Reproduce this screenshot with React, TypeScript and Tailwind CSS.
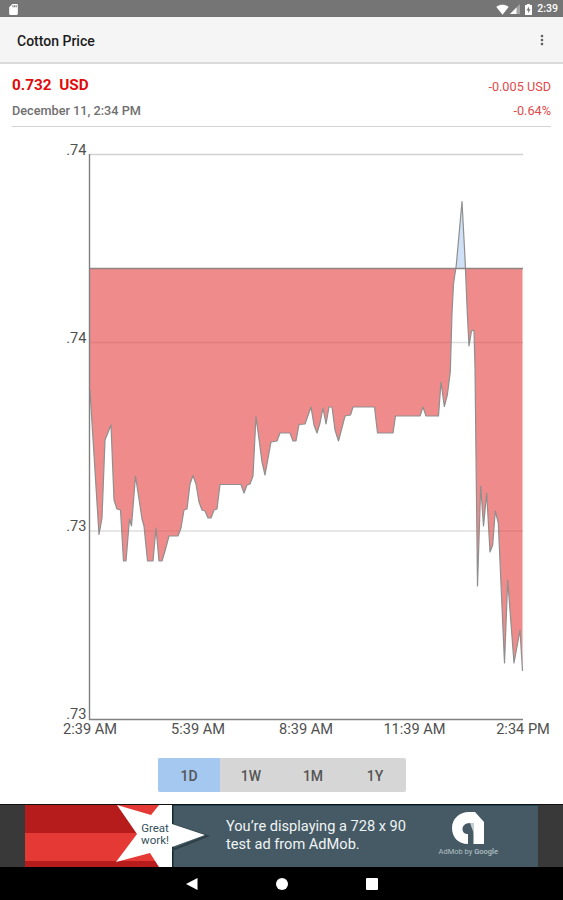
import { MdSdCard, MdSignalWifi4Bar, MdMoreVert } from "react-icons/md";

const BASELINE = 268.5;

// intraday price line, in chart coordinates
const POINTS = [
    [90, 390], [91, 407], [99, 534.5], [102, 518], [105, 440], [111, 425], [114, 500], [117, 509], [120.5, 510],
    [123.5, 561], [126, 561], [129.5, 519], [131.5, 526], [135.5, 476], [142, 519], [144, 526], [147.5, 561],
    [153, 561], [156, 528], [159, 561], [162, 561], [165, 551], [169, 536], [178, 536], [181, 528], [184, 510],
    [187, 509], [190, 484], [193, 475.5], [196, 484], [199, 502], [202, 510], [205, 511], [208, 518], [211, 518],
    [214, 510], [217, 509], [220, 484.5], [241, 484.5], [244, 493], [247, 485], [250, 484], [253, 476],
    [256, 416.5], [262, 462], [265, 475], [271, 442], [277, 441], [280, 433], [290, 433], [293, 441], [296, 441],
    [299, 424.5], [305, 424], [311, 407], [314, 425], [317, 433], [320, 423], [323, 408], [326, 424], [329, 407],
    [332, 407], [335, 430], [338.5, 441], [345, 416], [350.5, 415], [353, 407], [374.5, 407], [377.5, 433],
    [393, 433], [395.5, 416], [420, 416], [423, 407], [426, 416], [438.5, 416], [441, 382], [444.3, 406.5],
    [447.3, 395], [450.3, 372], [452, 313], [453.5, 284], [456.3, 265], [462, 201.5], [465, 258], [467.3, 313],
    [469, 346], [471.5, 331], [474, 330], [475, 367], [477.5, 586], [480.7, 486], [483.5, 526], [486.7, 493],
    [490, 552], [492.7, 545], [495.3, 511], [498.3, 523], [504.5, 663], [507.7, 580], [514, 663], [520, 630],
    [522.5, 671],
];

const line = POINTS.map((p) => p.join(",")).join(" ");
const area = `90,${BASELINE} ${line} 522.5,${BASELINE}`;

const Y_TICKS = [
    { y: 154.5, label: ".74" },
    { y: 342.5, label: ".74" },
    { y: 531, label: ".73" },
    { y: 719, label: ".73" },
];

const X_TICKS = [
    { x: 90, label: "2:39 AM" },
    { x: 198, label: "5:39 AM" },
    { x: 306, label: "8:39 AM" },
    { x: 414.5, label: "11:39 AM" },
    { x: 523, label: "2:34 PM" },
];

const RANGES = ["1D", "1W", "1M", "1Y"];

function StatusBar() {
    return (
        <div className="h-[17px] bg-[#757575] flex items-center justify-between pl-[7px] pr-[5px] pt-px text-white">
            <MdSdCard className="w-[13px] h-[13px]" />
            <div className="flex items-center">
                <MdSignalWifi4Bar className="w-[13px] h-[13px]" />
                <svg viewBox="0 0 10 10" className="w-[10px] h-[10px] ml-px">
                    <path d="M10 0V10H0z" fill="#a5a5a5" />
                    <path d="M6.5 3.5V10H0z" fill="#fff" />
                </svg>
                <svg viewBox="0 0 7 11" className="w-[7px] h-[11px] ml-[5px]">
                    <path d="M2 0H5V1H7V11H0V1H2z" fill="#fff" />
                    <path d="M4 2.500L1.500 6.500H3.200V9.300L5.500 5.300H4z" fill="#757575" />
                </svg>
                <span className="ml-[5px] mt-px text-[10.5px] leading-none font-medium">2:39</span>
            </div>
        </div>
    );
}

function PriceChart() {
    return (
        <svg viewBox="0 128 563 618" className="block w-full h-[618px]">
            <defs>
                <clipPath id="above">
                    <rect x="90" y="150" width="433" height={BASELINE - 150} />
                </clipPath>
                <clipPath id="below">
                    <rect x="90" y={BASELINE} width="433" height="450" />
                </clipPath>
            </defs>
            {Y_TICKS.slice(0, 3).map((t) => (
                <line key={t.y} x1="90" x2="523" y1={t.y} y2={t.y} stroke={t.y < 200 ? "#d2d2d2" : "#dedede"} strokeWidth="1.4" />
            ))}
            <polygon points={area} fill="#cfe1f6" clipPath="url(#above)" />
            <polygon points={area} fill="#e43e3e" fillOpacity="0.6" clipPath="url(#below)" />
            <polyline points={line} fill="none" stroke="#8f8f8f" strokeWidth="1.2" strokeLinejoin="round" />
            <line x1="90" x2="523" y1={BASELINE} y2={BASELINE} stroke="#8f8383" strokeWidth="1.4" />
            <path d="M89.5 154V719.500H523" fill="none" stroke="#808080" strokeWidth="1.4" />
            <g fill="#505050" fontSize="14.6">
                {Y_TICKS.map((t) => (
                    <text key={t.y} x="86.5" y={t.y} textAnchor="end">{t.label}</text>
                ))}
                {X_TICKS.map((t) => (
                    <text key={t.x} x={t.x} y="734" textAnchor="middle">{t.label}</text>
                ))}
            </g>
        </svg>
    );
}

function AdBanner() {
    return (
        <div className="h-[63px] flex bg-[#393939] px-[25px] border-t border-[#111]">
            <div className="relative w-[147px] shrink-0 bg-[#b71c1c]">
                <div className="h-[28px]" />
                <div className="h-[28px] bg-[#e53935]" />
                <svg viewBox="0 0 190 62" className="absolute top-0 left-0 w-[190px] h-[62px]">
                    <path d="M92 0H134L126 11z" fill="#e53935" />
                    <path d="M147 19V0H148.500V62H147V45z" fill="#17272f" />
                    <path d="M147 19.500L182 31L147 45" fill="none" stroke="#2f4048" strokeWidth="2" />
                    <path d="M92 0L126 10L134 0H147V19L180 30L147 42V62H134L125 48L91 57L112 29z" fill="#fff" />
                </svg>
                <div className="absolute left-[113px] top-[17px] w-[34px] text-center text-[11.5px] leading-[12px] text-[#35505c]">
                    Great work!
                </div>
            </div>
            <div className="flex-1 flex justify-between bg-[#455a64] border-t border-[#1f4450] pl-[54px] pr-[40px] text-[#f0f4f5]">
                <p className="pt-[11px] text-[14.6px] leading-[18px] whitespace-nowrap">
                    You’re displaying a 728 x 90
                    <br />
                    test ad from AdMob.
                </p>
                <div className="flex flex-col items-center pt-[6px]">
                    <svg viewBox="0 0 32 33" className="w-[32px] h-[33px]">
                        <path
                            d="M17 0H23L32 10V32H21.500V11H18C13 11 10.500 14 10.500 17C10.500 20 12.500 22 16 22V32C6 32 0 25 0 16C0 7 7 0 17 0z"
                            fill="#fff"
                        />
                        <path d="M18 11H22V22z" fill="#c3ced2" />
                    </svg>
                    <div className="mt-[2px] text-[7.5px] leading-[9px] text-[#b3c0c5] whitespace-nowrap">
                        AdMob by <span className="font-medium">Google</span>
                    </div>
                </div>
            </div>
        </div>
    );
}

export default function App() {
    return (
        <div className="w-[563px] h-[900px] flex flex-col overflow-hidden bg-white font-['Roboto',sans-serif]">
            <StatusBar />
            <header className="h-[47px] flex items-center justify-between bg-[#f5f5f5] border-b-2 border-[#dadada] pl-[17px] pr-[13px]">
                <h1 className="text-sm font-medium text-[#1c1c1c] pt-0.5">Cotton Price</h1>
                <MdMoreVert className="w-4 h-4 text-[#606060]" />
            </header>

            <section className="mx-3 h-[63px] border-b border-[#d4d4d4]">
                <div className="flex justify-between pt-[11px] leading-5">
                    <span className="text-[15.3px] font-bold text-[#e00b0b] whitespace-pre">0.732  USD</span>
                    <span className="text-[12.7px] text-[#e04a4a] pt-[2px]">-0.005 USD</span>
                </div>
                <div className="flex justify-between pt-[4px] leading-5">
                    <span className="text-[12.7px] font-medium text-[#707070]">December 11, 2:34 PM</span>
                    <span className="text-[12.7px] text-[#e04a4a]">-0.64%</span>
                </div>
            </section>

            <div className="pt-px">
                <PriceChart />
            </div>

            <div className="flex-1 pt-[12px]">
                <div className="w-[248px] h-[34px] ml-[158px] grid grid-cols-4 rounded-[2px] overflow-hidden bg-[#d6d6d6]">
                    {RANGES.map((range) => (
                        <button
                            key={range}
                            className={`pt-0.5 text-sm font-medium text-[#555] ${range === "1D" ? "bg-[#a4c8f0]" : ""}`}
                        >
                            {range}
                        </button>
                    ))}
                </div>
            </div>

            <AdBanner />

            <nav className="h-[33px] bg-black flex items-center justify-center gap-[78px] pl-px">
                <svg viewBox="0 0 12 12" className="w-3 h-3">
                    <path d="M11.500 0V12L0 6z" fill="#fff" />
                </svg>
                <span className="w-3 h-3 rounded-full bg-white" />
                <span className="w-3 h-3 rounded-[1px] bg-white" />
            </nav>
        </div>
    );
}
